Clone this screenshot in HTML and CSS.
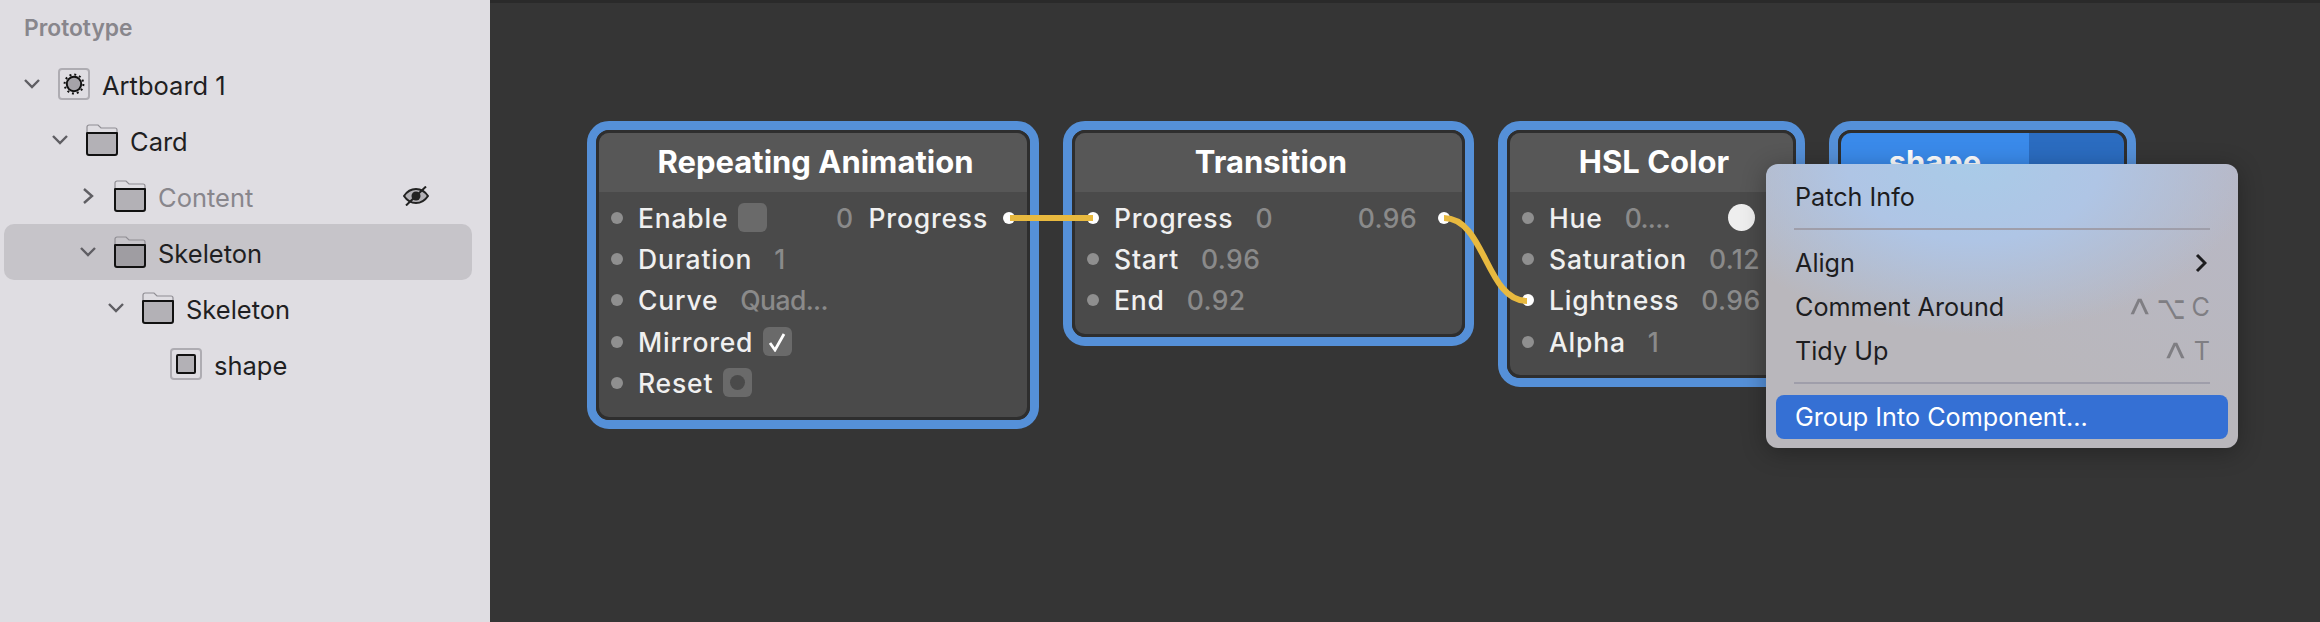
FILE: index.html
```html
<!DOCTYPE html>
<html lang="en">
<head>
    <meta charset="UTF-8">
    <title>Prototype</title>
    <link rel="stylesheet" href="styles.css">
</head>
<body>
    <svg class="defs" width="0" height="0">
        <symbol id="folder" viewBox="0 0 32 32">
            <path d="M1 8V3a2 2 0 0 1 2-2h9l3 3h14a2 2 0 0 1 2 2v3" fill="none" stroke="#8f8d93" stroke-width="1.2"/>
            <path d="M1 9h30v20a2 2 0 0 1-2 2H3a2 2 0 0 1-2-2z" fill="currentColor" stroke="#111" stroke-width="2" stroke-linejoin="round"/>
        </symbol>
        <symbol id="chev-down" viewBox="0 0 16 16">
            <path d="M1 4l7 7 7-7" fill="none" stroke="#5f5e63" stroke-width="2.4"/>
        </symbol>
        <symbol id="chev-right" viewBox="0 0 16 16">
            <path d="M4 1l8 7-8 7" fill="none" stroke="#5f5e63" stroke-width="2.4"/>
        </symbol>
    </svg>

    <aside class="sidebar">
        <h2 class="sidebar-title">Prototype</h2>
        <ul class="tree">
            <li class="row lvl-0">
                <svg class="chev"><use href="#chev-down"/></svg>
                <span class="layer-box">
                    <svg width="24" height="24" viewBox="0 0 24 24">
                        <circle cx="12" cy="12" r="9.4" fill="none" stroke="#111" stroke-width="2" stroke-dasharray="2 2.920"/>
                        <circle cx="12" cy="12" r="7.200" fill="#a5a3a9" stroke="#111" stroke-width="2"/>
                    </svg>
                </span>
                <span class="row-name">Artboard 1</span>
            </li>
            <li class="row lvl-1">
                <svg class="chev"><use href="#chev-down"/></svg>
                <svg class="folder"><use href="#folder"/></svg>
                <span class="row-name">Card</span>
            </li>
            <li class="row lvl-2 hidden-layer">
                <svg class="chev"><use href="#chev-right"/></svg>
                <svg class="folder"><use href="#folder"/></svg>
                <span class="row-name">Content</span>
                <svg class="eye" width="26" height="20" viewBox="0 0 26 20">
                    <path d="M1 10c3-4.500 7-7 12-7s9 2.500 12 7c-3 4.500-7 7-12 7S4 14.500 1 10z" fill="#b3b1b6" stroke="#222" stroke-width="2"/>
                    <circle cx="13" cy="10" r="4.500" fill="#222"/>
                    <path d="M3 19.500L23 .5" stroke="#222" stroke-width="2"/>
                </svg>
            </li>
            <li class="row lvl-2 selected">
                <svg class="chev"><use href="#chev-down"/></svg>
                <svg class="folder"><use href="#folder"/></svg>
                <span class="row-name">Skeleton</span>
            </li>
            <li class="row lvl-3">
                <svg class="chev"><use href="#chev-down"/></svg>
                <svg class="folder"><use href="#folder"/></svg>
                <span class="row-name">Skeleton</span>
            </li>
            <li class="row lvl-4">
                <span class="chev"></span>
                <span class="layer-box"><span class="shape-square"></span></span>
                <span class="row-name">shape</span>
            </li>
        </ul>
    </aside>

    <main class="canvas">
        <section class="node node-repeat">
            <div class="node-inner">
                <div class="node-title">Repeating Animation</div>
                <div class="node-body">
                    <div class="port">
                        <span class="dot"></span><span class="label">Enable</span><span class="box"></span>
                        <span class="value push">0</span><span class="label out-label">Progress</span><span class="dot on out"></span>
                    </div>
                    <div class="port"><span class="dot"></span><span class="label">Duration</span><span class="value">1</span></div>
                    <div class="port"><span class="dot"></span><span class="label">Curve</span><span class="value cut">Quad...</span></div>
                    <div class="port">
                        <span class="dot"></span><span class="label">Mirrored</span>
                        <span class="box">
                            <svg width="20" height="20" viewBox="0 0 20 20"><path d="M2 11l5 7L16 2" fill="none" stroke="#fff" stroke-width="2.8"/></svg>
                        </span>
                    </div>
                    <div class="port"><span class="dot"></span><span class="label">Reset</span><span class="box"><span class="pulse"></span></span></div>
                </div>
            </div>
        </section>

        <section class="node node-transition">
            <div class="node-inner">
                <div class="node-title">Transition</div>
                <div class="node-body">
                    <div class="port">
                        <span class="dot on"></span><span class="label">Progress</span><span class="value">0</span>
                        <span class="value push">0.96</span><span class="dot on out"></span>
                    </div>
                    <div class="port"><span class="dot"></span><span class="label">Start</span><span class="value">0.96</span></div>
                    <div class="port"><span class="dot"></span><span class="label">End</span><span class="value">0.92</span></div>
                </div>
            </div>
        </section>

        <section class="node node-hsl">
            <div class="node-inner">
                <div class="node-title">HSL Color</div>
                <div class="node-body">
                    <div class="port"><span class="dot"></span><span class="label">Hue</span><span class="value cut">0....</span><span class="swatch push"></span></div>
                    <div class="port"><span class="dot"></span><span class="label">Saturation</span><span class="value">0.12</span></div>
                    <div class="port"><span class="dot on"></span><span class="label">Lightness</span><span class="value">0.96</span></div>
                    <div class="port"><span class="dot"></span><span class="label">Alpha</span><span class="value">1</span></div>
                </div>
            </div>
        </section>

        <section class="node node-shape">
            <div class="node-inner shape-inner">
                <div class="shape-name">shape</div>
                <div class="shape-side"></div>
            </div>
        </section>

        <svg class="wires" width="1830" height="622" viewBox="490 0 1830 622">
            <path d="M1010 218H1093" />
            <path d="M1444 218C1485 218 1486 301 1527 301" />
        </svg>

        <nav class="menu">
            <div class="menu-item">Patch Info</div>
            <div class="menu-sep"></div>
            <div class="menu-item">Align
                <svg class="menu-arrow" width="12" height="20" viewBox="0 0 12 20"><path d="M2 2l8 8-8 8" fill="none" stroke="#1d1d1f" stroke-width="3"/></svg>
            </div>
            <div class="menu-item">Comment Around
                <span class="shortcut"><span class="key-ctrl">^</span><span class="key-opt">⌥</span>C</span>
            </div>
            <div class="menu-item">Tidy Up
                <span class="shortcut"><span class="key-ctrl key-gap">^</span>T</span>
            </div>
            <div class="menu-sep"></div>
            <div class="menu-item active">Group Into Component...</div>
        </nav>
    </main>
</body>
</html>
```

FILE: styles.css
```css
* {
    box-sizing: border-box;
}

body {
    margin: 0;
    display: flex;
    width: 2320px;
    height: 622px;
    overflow: hidden;
    font-family: Inter, "Noto Sans", sans-serif;
    background: #353535;
}

.defs {
    position: absolute;
}

/* left panel */
.sidebar {
    width: 490px;
    flex: none;
    padding: 0 18px 0 4px;
    background: #dfdde2;
}

.sidebar-title {
    margin: 0;
    height: 56px;
    padding-left: 20px;
    font-size: 22.8px;
    line-height: 56px;
    font-weight: 600;
    color: #88868c;
}

.tree {
    margin: 0;
    padding: 0;
    list-style: none;
}

.row {
    display: flex;
    align-items: center;
    height: 56px;
    padding-right: 43px;
    border-radius: 10px;
    color: #1f1f22;
    font-size: 25.5px;
}

.lvl-0 { padding-left: 20px; }
.lvl-1 { padding-left: 48px; }
.lvl-2 { padding-left: 76px; }
.lvl-3 { padding-left: 104px; }
.lvl-4 { padding-left: 132px; }

.chev {
    display: block;
    flex: none;
    width: 16px;
    height: 16px;
    margin-right: 18px;
}

.folder {
    display: block;
    flex: none;
    width: 32px;
    height: 32px;
    color: #b3b1b6;
}

.layer-box {
    display: flex;
    align-items: center;
    justify-content: center;
    flex: none;
    width: 32px;
    height: 32px;
    border: 2px solid #aeacb2;
    border-radius: 4px;
}

.shape-square {
    width: 20px;
    height: 20px;
    border: 2px solid #111;
    border-radius: 2px;
    background: #b3b1b6;
}

.row-name {
    margin-left: 12px;
    padding-top: 2px;
}

.hidden-layer .row-name {
    color: #88868c;
}

.eye {
    margin-left: auto;
}

.selected {
    background: #c6c4c9;
}

.selected .folder {
    color: #9f9da2;
}

/* patch canvas */
.canvas {
    position: relative;
    flex: 1;
    background: #353535;
    border-top: 3px solid #2a2a2a;
}

.node {
    position: absolute;
    top: 118px;
    border: 9px solid #5590d8;
    border-radius: 22px;
}

.node-repeat { left: 97px; width: 452px; }
.node-transition { left: 573px; width: 411px; }
.node-hsl { left: 1008px; width: 307px; }
.node-shape { left: 1339px; width: 307px; }

.node-inner {
    overflow: hidden;
    border: 3px solid #2e2e2e;
    border-radius: 13px;
    background: #4a4a4a;
}

.node-title {
    height: 59px;
    padding-left: 5px;
    background: #575757;
    color: #fff;
    font-size: 31px;
    font-weight: 700;
    line-height: 57px;
    text-align: center;
}

.node-body {
    padding: 5px 12px 13px;
}

.port {
    display: flex;
    align-items: center;
    height: 41.33px;
    white-space: nowrap;
    font-size: 26.5px;
    font-weight: 500;
}

.dot {
    flex: none;
    width: 12px;
    height: 12px;
    margin-right: 15px;
    border-radius: 50%;
    background: #8f8f8f;
}

.dot.on {
    background: #fff;
}

.dot.out {
    margin: 0 0 0 15px;
}

.value + .dot.out {
    margin-left: 21px;
}

.label {
    color: #f0f0f0;
    letter-spacing: 0.8px;
}

.out-label {
    margin-left: 15px;
}

.value {
    margin-left: 22px;
    color: #8a8a8a;
    letter-spacing: 0.4px;
}

.value.cut {
    letter-spacing: -0.6px;
}

.value.push,
.swatch.push {
    margin-left: auto;
}

.box {
    display: flex;
    align-items: center;
    justify-content: center;
    width: 29px;
    height: 29px;
    margin-left: 10px;
    border-radius: 6px;
    background: #6a6a6a;
}

.pulse {
    width: 15px;
    height: 15px;
    border-radius: 50%;
    background: #4a4a4a;
}

.swatch {
    width: 27px;
    height: 27px;
    margin-right: 26px;
    border-radius: 50%;
    background: #eee;
}

.shape-inner {
    display: flex;
    height: 100px;
}

.shape-name {
    width: 188px;
    background: #3a8aea;
    color: #fff;
    font-size: 31px;
    font-weight: 700;
    line-height: 57px;
    text-align: center;
}

.shape-side {
    flex: 1;
    background: #2b6cc0;
}

.wires {
    position: absolute;
    top: -3px;
    left: 0;
    fill: none;
    stroke: #e8b93f;
    stroke-width: 6;
}

/* right click menu */
.menu {
    position: absolute;
    top: 161px;
    left: 1276px;
    width: 472px;
    height: 284px;
    padding: 11px 10px 10px;
    border-radius: 12px;
    background:
        radial-gradient(ellipse 280px 170px at 44% 0, #a9cbe8 0, #afc5e5 45%, rgba(178, 190, 215, 0) 100%),
        linear-gradient(200deg, #b8b8c6 0, #b9b7bc 60%);
    box-shadow: 0 4px 24px rgba(0, 0, 0, 0.3);
    font-size: 25.2px;
    color: #1d1d1f;
}

.menu-item {
    display: flex;
    align-items: center;
    height: 44px;
    padding: 0 18px 0 19px;
    border-radius: 8px;
}

.menu-item.active {
    margin-top: 1px;
    background: #3570d4;
    color: #fff;
}

.menu-sep {
    height: 2px;
    margin: 9px 18px 11px;
    background: #9f9eaa;
}

.menu-arrow {
    margin-left: auto;
    margin-right: 3px;
}

.shortcut {
    display: flex;
    align-items: center;
    margin-left: auto;
    color: #7f7e83;
}

.key-ctrl {
    font-size: 50px;
    font-weight: 300;
    line-height: 1;
    transform: translateY(9px);
}

.key-gap {
    margin-right: 7px;
}

.key-opt {
    margin: 0 6px 0 6px;
    font-family: "DejaVu Sans", sans-serif;
    font-size: 25px;
    line-height: 1;
    transform: scaleY(1.3);
}
```
